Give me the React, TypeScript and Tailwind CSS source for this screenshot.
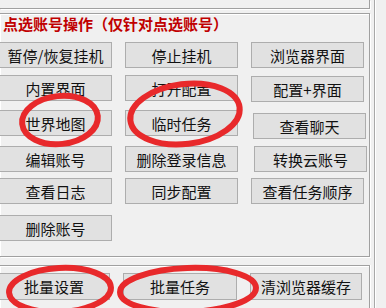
const font = { fontFamily: '"Noto Sans CJK SC", "Noto Sans", sans-serif' };

type Btn = { label: string; cls?: string };

const rows: { top: string; btns: Btn[] }[] = [
  { top: "mt-[8px]", btns: [{ label: "暂停/恢复挂机" }, { label: "停止挂机" }, { label: "浏览器界面" }] },
  { top: "mt-[7px]", btns: [{ label: "内置界面" }, { label: "打开配置" }, { label: "配置+界面", cls: "mt-[1px]" }] },
  { top: "mt-[8px]", btns: [{ label: "世界地图" }, { label: "临时任务" }, { label: "查看聊天", cls: "mt-[3px] ml-[2px]" }] },
  { top: "mt-[7px]", btns: [{ label: "编辑账号" }, { label: "删除登录信息" }, { label: "转换云账号", cls: "ml-[3px]" }] },
  { top: "mt-[6px]", btns: [{ label: "查看日志" }, { label: "同步配置" }, { label: "查看任务顺序" }] },
  { top: "mt-[11px]", btns: [{ label: "删除账号" }] },
];

function WinButton({ label, cls = "", w = "w-[113px]", h = "h-[26px]" }: { label: string; cls?: string; w?: string; h?: string }) {
  return (
    <div
      className={`${w} ${h} ${cls} shrink-0 flex items-center justify-center bg-[#e1e1e1] border border-[#adadad] text-[15px] text-[#111] leading-none`}
    >
      {label}
    </div>
  );
}

export default function App() {
  return (
    <div className="relative w-[386px] h-[308px] overflow-hidden bg-[#f0f0f0] flex" style={font}>
      <div className="w-[370px] flex flex-col">
        {/* upper panel edge */}
        <div className="h-[9px] border-b border-r border-[#a0a0a0] shadow-[1px_1px_0_#ffffff]" />

        {/* account operations group */}
        <div className="mt-[4px] h-[244px] border-t border-b border-r border-[#a0a0a0] shadow-[1px_1px_0_#ffffff,inset_1px_1px_0_#ffffff] flex flex-col">
          <div className="pl-[3px] h-[20px] leading-[20px] text-[15px] font-bold text-[#c00000]">
            点选账号操作（仅针对点选账号）
          </div>
          {rows.map((r, i) => (
            <div key={i} className={`${r.top} flex items-start gap-[13px] -ml-[1px]`}>
              {r.btns.map((b) => (
                <WinButton key={b.label} label={b.label} cls={b.cls} />
              ))}
            </div>
          ))}
        </div>

        {/* batch group */}
        <div className="mt-[8px] flex-1 border-t border-r border-[#a0a0a0] shadow-[1px_0_0_#ffffff,inset_1px_1px_0_#ffffff]">
          <div className="mt-[7px] flex gap-[13px] -ml-[2px]">
            <WinButton label="批量设置" w="w-[112px]" h="h-[27px]" />
            <WinButton label="批量任务" w="w-[114px]" h="h-[27px]" />
            <WinButton label="清浏览器缓存" w="w-[112px]" h="h-[27px]" />
          </div>
        </div>
      </div>

      {/* right side edge */}
      <div className="ml-[4px] w-[1px] bg-[#a8a8a8]" />
      <div className="w-[1px] bg-white" />

      {/* red annotation marks */}
      <svg className="absolute left-0 top-0 pointer-events-none" width="386" height="308">
        <g fill="none" stroke="#e8292b" strokeWidth="6">
          <ellipse cx="60" cy="120" rx="38" ry="24" transform="rotate(-6 60 120)" />
          <ellipse cx="185" cy="114" rx="55" ry="30" transform="rotate(-7 185 114)" />
          <ellipse cx="60" cy="290" rx="51" ry="22" transform="rotate(-3 60 290)" />
          <ellipse cx="188" cy="290" rx="68" ry="22" transform="rotate(-2 188 290)" />
        </g>
      </svg>
    </div>
  );
}
